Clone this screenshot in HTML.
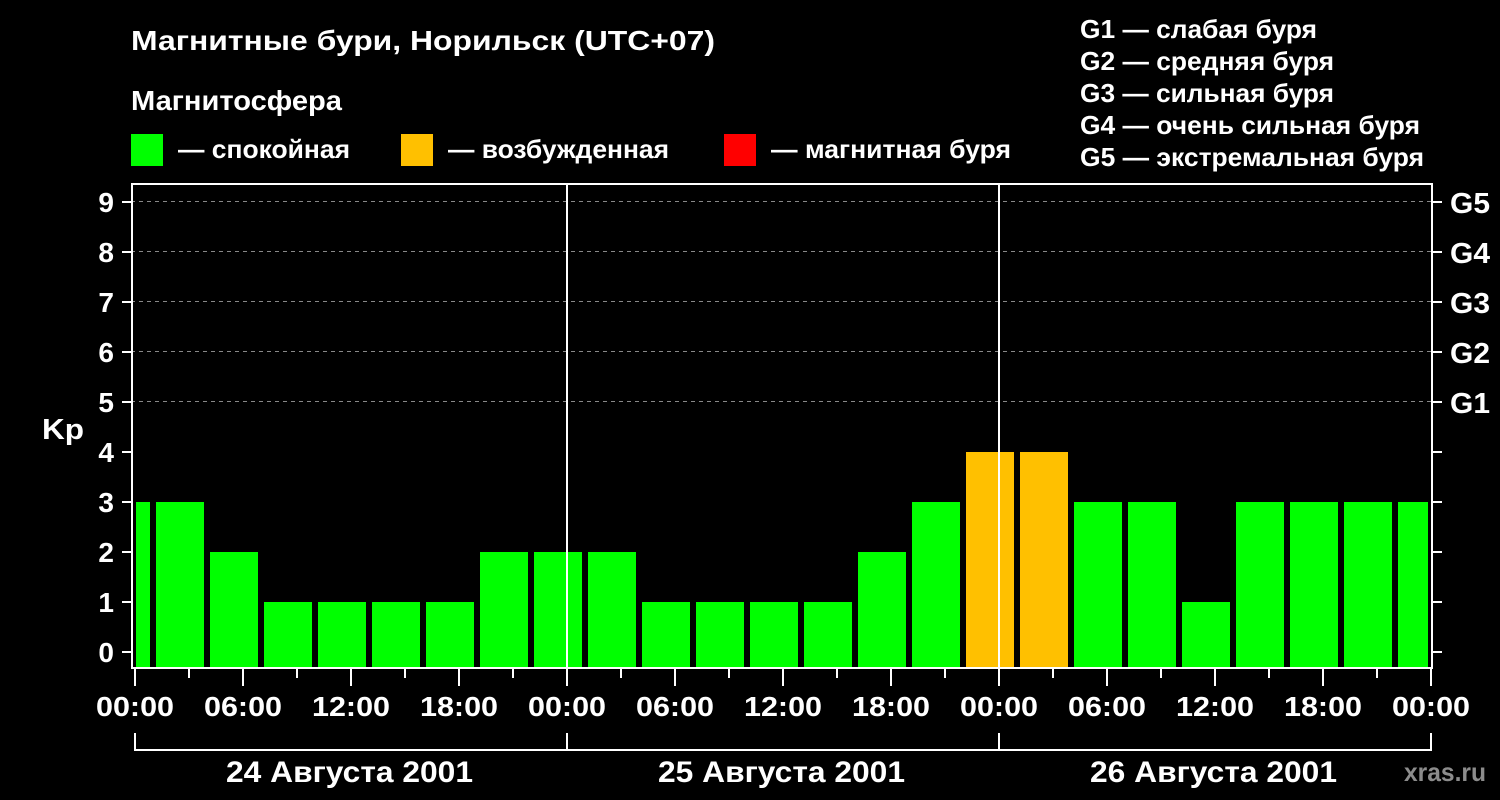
<!DOCTYPE html>
<html><head><meta charset="utf-8"><style>body{margin:0;background:#000}svg{display:block}text{font-family:"Liberation Sans",sans-serif;font-weight:bold;fill:#fff}</style></head><body>
<svg width="1500" height="800" xmlns="http://www.w3.org/2000/svg">
<rect width="1500" height="800" fill="#000"/>
<text x="131" y="50" font-size="28" textLength="584" lengthAdjust="spacingAndGlyphs">Магнитные бури, Норильск (UTC+07)</text>
<text x="131" y="110" font-size="28" textLength="211" lengthAdjust="spacingAndGlyphs">Магнитосфера</text>
<rect x="131" y="134" width="32" height="32" fill="#00ff00"/><text x="178" y="158" font-size="26" textLength="172" lengthAdjust="spacingAndGlyphs">— спокойная</text>
<rect x="401" y="134" width="32" height="32" fill="#ffc000"/><text x="448" y="158" font-size="26" textLength="221" lengthAdjust="spacingAndGlyphs">— возбужденная</text>
<rect x="724" y="134" width="32" height="32" fill="#ff0000"/><text x="771" y="158" font-size="26" textLength="240" lengthAdjust="spacingAndGlyphs">— магнитная буря</text>
<g font-size="26" lengthAdjust="spacingAndGlyphs"><text x="1080" y="38" textLength="237" lengthAdjust="spacingAndGlyphs">G1 — слабая буря</text><text x="1080" y="70" textLength="254" lengthAdjust="spacingAndGlyphs">G2 — средняя буря</text><text x="1080" y="102" textLength="254" lengthAdjust="spacingAndGlyphs">G3 — сильная буря</text><text x="1080" y="134" textLength="340" lengthAdjust="spacingAndGlyphs">G4 — очень сильная буря</text><text x="1080" y="166" textLength="344" lengthAdjust="spacingAndGlyphs">G5 — экстремальная буря</text></g>
<g stroke="#888" stroke-dasharray="4,4" stroke-width="1">
<line x1="131" x2="1433" y1="201.5" y2="201.5"/><line x1="131" x2="1433" y1="251.5" y2="251.5"/><line x1="131" x2="1433" y1="301.5" y2="301.5"/><line x1="131" x2="1433" y1="351.5" y2="351.5"/><line x1="131" x2="1433" y1="401.5" y2="401.5"/></g>
<g id="bars"></g>
<g stroke="#fff" stroke-width="2" fill="none">
<rect x="132" y="184" width="1300" height="484"/>
<line x1="567" y1="183" x2="567" y2="668"/><line x1="999" y1="183" x2="999" y2="668"/>
</g>
<g id="ticks" stroke="#fff" stroke-width="2"></g>
<g id="labels" font-size="26"></g>
<text x="42" y="439" font-size="29" textLength="42" lengthAdjust="spacingAndGlyphs">Kp</text>
<g stroke="#fff" stroke-width="2" fill="none"><path d="M135 733V750H1431V733M567 733V750M999 733V750"/></g>
<text x="226" y="782" font-size="30" textLength="247" lengthAdjust="spacingAndGlyphs">24 Августа 2001</text>
<text x="658" y="782" font-size="30" textLength="247" lengthAdjust="spacingAndGlyphs">25 Августа 2001</text>
<text x="1090" y="782" font-size="30" textLength="247" lengthAdjust="spacingAndGlyphs">26 Августа 2001</text>
<text x="1404" y="781" font-size="26" style="fill:#8c8c8c" textLength="82" lengthAdjust="spacingAndGlyphs">xras.ru</text>
<script>
var ns="http://www.w3.org/2000/svg";
function el(p,t,a,tx){var e=document.createElementNS(ns,t);for(var k in a)e.setAttribute(k,a[k]);if(tx)e.textContent=tx;document.getElementById(p).appendChild(e);}
var G="#00ff00",O="#ffc000";
el("bars","rect",{x:136,y:502,width:14,height:166,fill:G});
var v=[3,2,1,1,1,1,2,2,2,1,1,1,1,2,3,4,4,3,3,1,3,3,3,3];
for(var k=0;k<24;k++){var x=156+54*k,w=k==23?30:48,y=652-50*v[k];el("bars","rect",{x:x,y:y,width:w,height:668-y,fill:v[k]>=4?O:G});}
for(var i=0;i<=9;i++){var y=652-50*i;el("ticks","line",{x1:122,x2:132,y1:y,y2:y});el("ticks","line",{x1:1432,x2:1442,y1:y,y2:y});el("labels","text",{x:114,y:y+10,"text-anchor":"end","font-size":28},""+i);}
var gs=["G1","G2","G3","G4","G5"];for(var i=0;i<5;i++){el("labels","text",{x:1450,y:402-50*i+11,"font-size":29,textLength:40,lengthAdjust:"spacingAndGlyphs"},gs[i]);}
var tl=["00:00","06:00","12:00","18:00"];
for(var h=0;h<=72;h+=3){var x=135+18*h;el("ticks","line",{x1:x,x2:x,y1:668,y2:h%6==0?686:678});if(h%6==0)el("labels","text",{x:x-39,y:716,"font-size":28,textLength:78,lengthAdjust:"spacingAndGlyphs"},tl[(h%24)/6]);}
</script>
</svg></body></html>
